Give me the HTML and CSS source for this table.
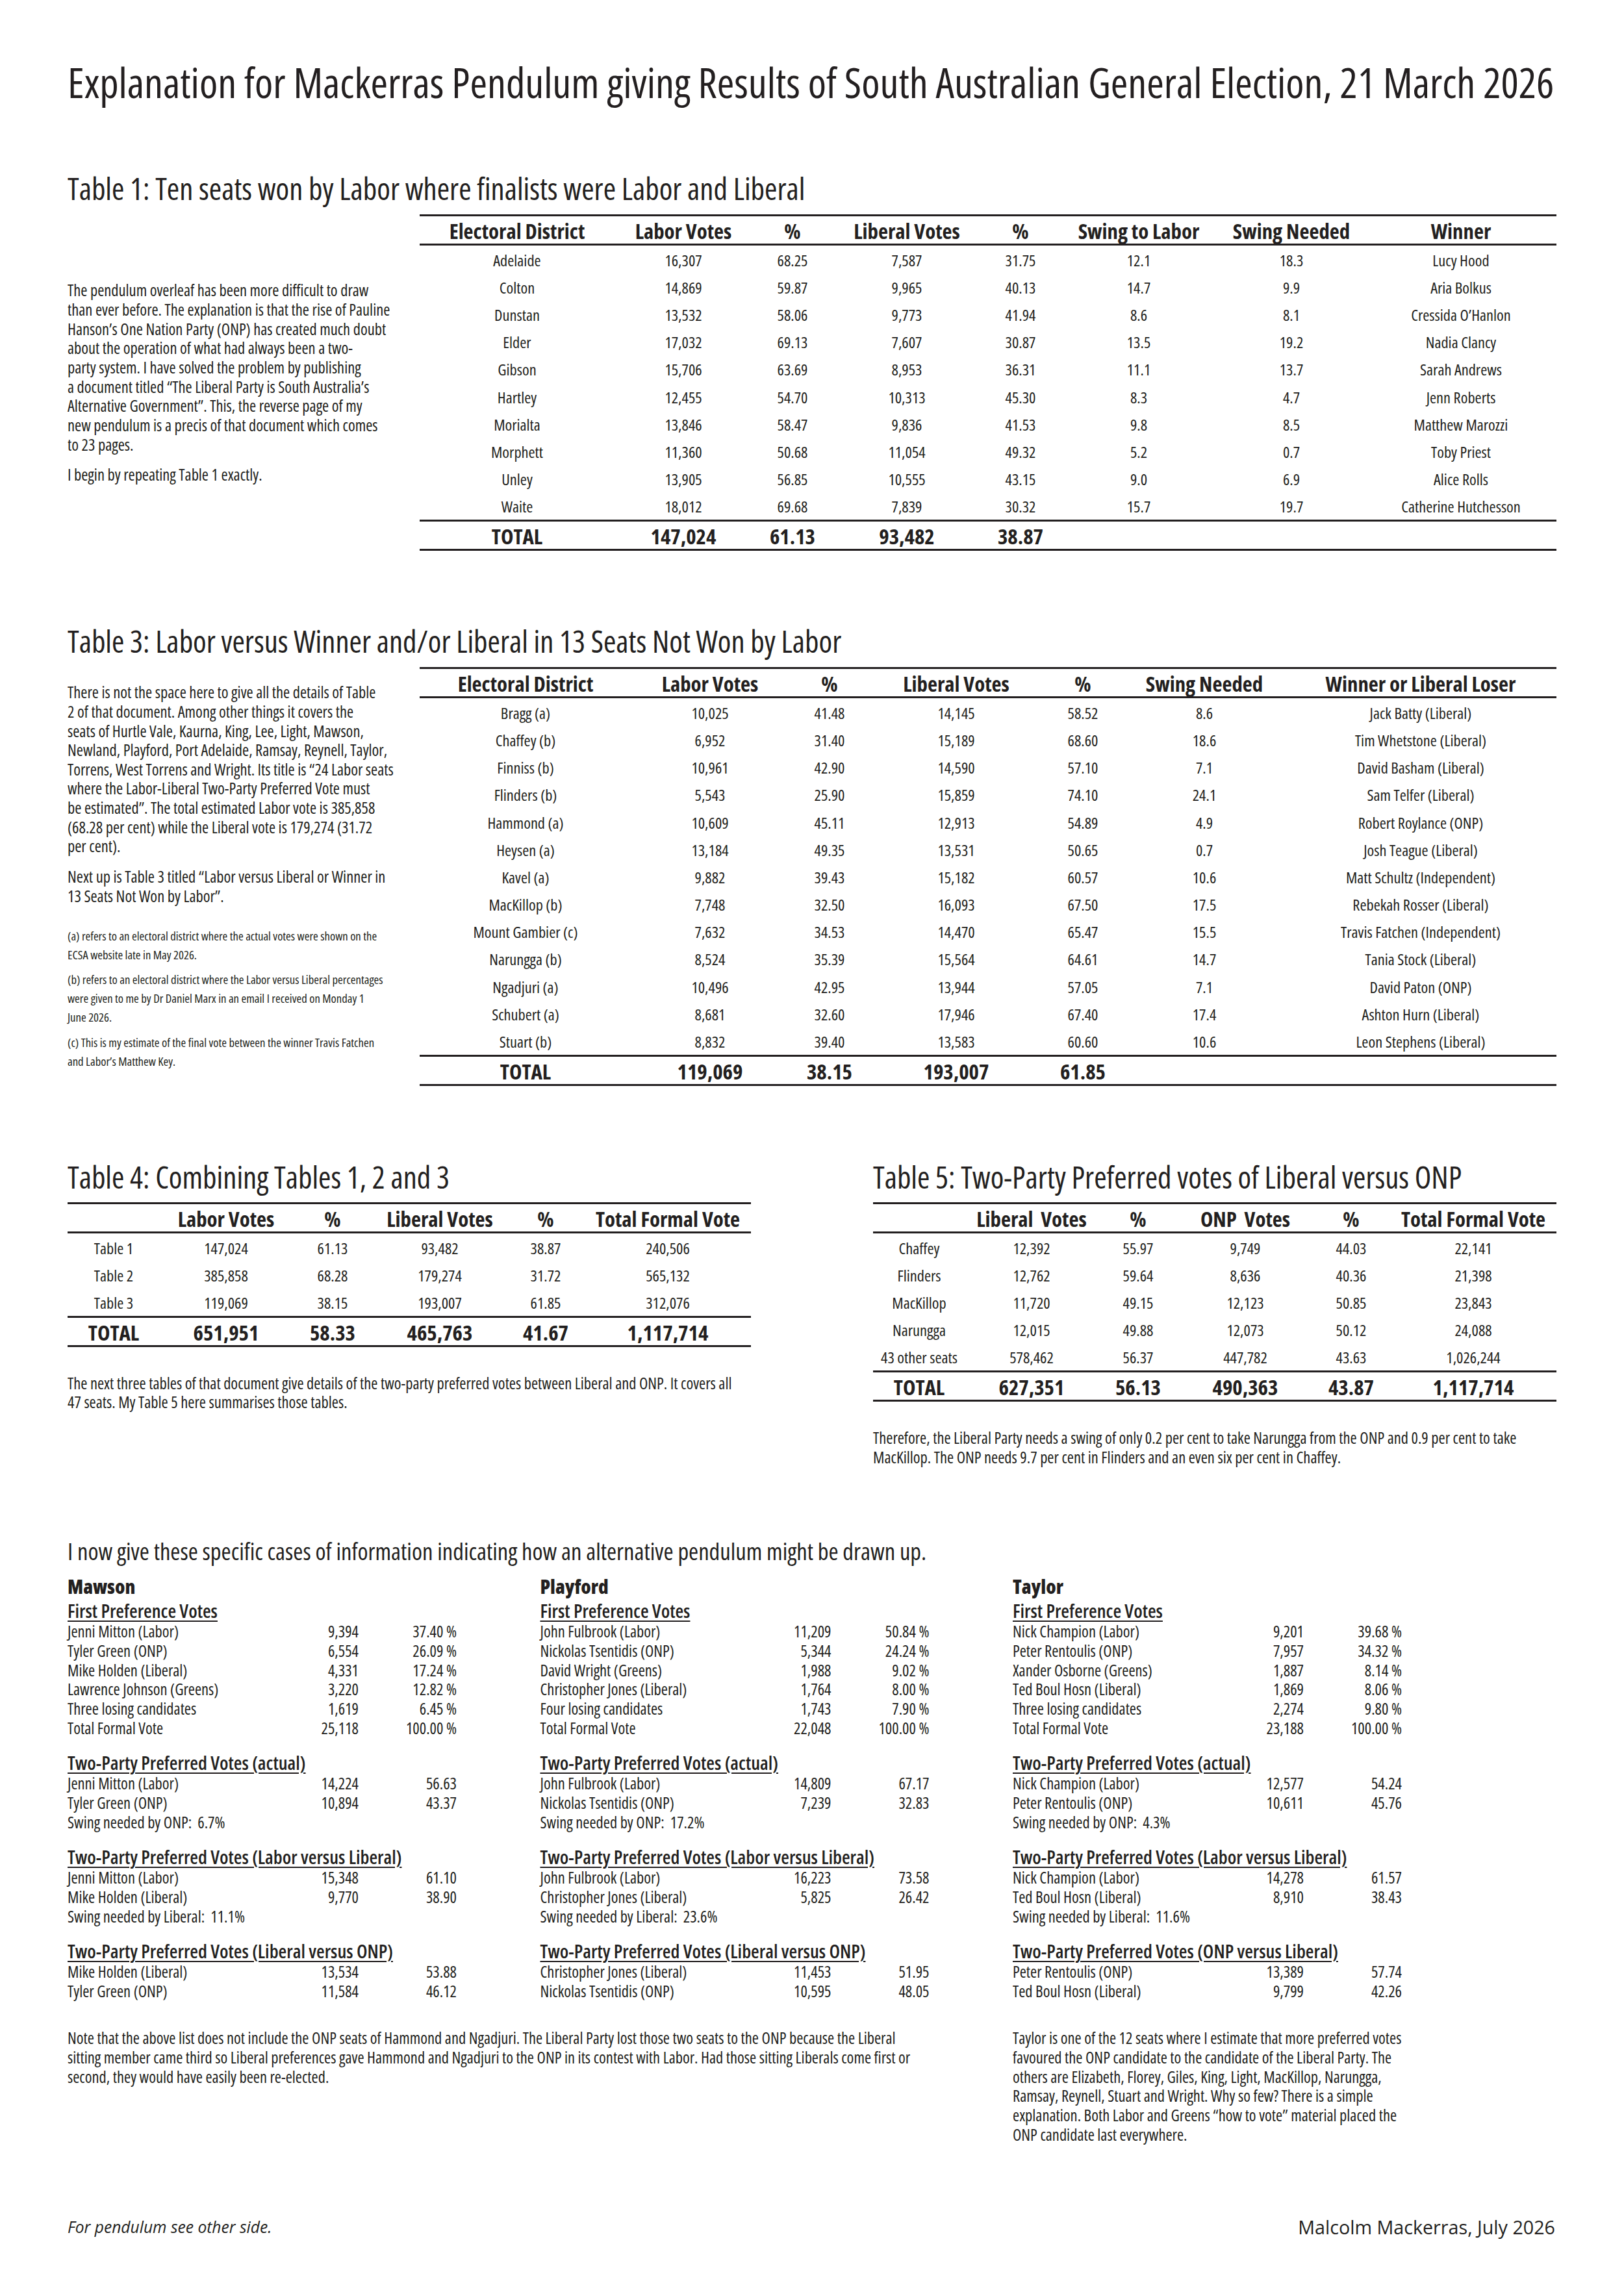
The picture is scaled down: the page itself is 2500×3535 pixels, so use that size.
FILE: index.html
```html
<!DOCTYPE html>
<html lang="en">
<head>
<meta charset="utf-8">
<title>Explanation for Mackerras Pendulum</title>
<link rel="stylesheet" href="styles.css">
</head>
<body>
<div class="page">
  <h1 class="title">Explanation for Mackerras Pendulum giving Results of South Australian General Election, 21 March 2026</h1>

  <section class="sec1">
    <h2 class="sec-title">Table 1: Ten seats won by Labor where finalists were Labor and Liberal</h2>
    <div class="split">
      <div class="side">
        <p>The pendulum overleaf has been more difficult to draw<br>than ever before. The explanation is that the rise of Pauline<br>Hanson’s One Nation Party (ONP) has created much doubt<br>about the operation of what had always been a two-<br>party system. I have solved the problem by publishing<br>a document titled “The Liberal Party is South Australia’s<br>Alternative Government”. This, the reverse page of my<br>new pendulum is a precis of that document which comes<br>to 23 pages.</p>
        <p>I begin by repeating Table 1 exactly.</p>
      </div>
      <table class="tbl t1">
        <colgroup><col><col><col><col><col><col><col><col></colgroup>
        <thead><tr><th>Electoral District</th><th>Labor Votes</th><th>%</th><th>Liberal Votes</th><th>%</th><th>Swing to Labor</th><th>Swing Needed</th><th>Winner</th></tr></thead>
        <tbody>
          <tr><td>Adelaide</td><td>16,307</td><td>68.25</td><td>7,587</td><td>31.75</td><td>12.1</td><td>18.3</td><td>Lucy Hood</td></tr>
          <tr><td>Colton</td><td>14,869</td><td>59.87</td><td>9,965</td><td>40.13</td><td>14.7</td><td>9.9</td><td>Aria Bolkus</td></tr>
          <tr><td>Dunstan</td><td>13,532</td><td>58.06</td><td>9,773</td><td>41.94</td><td>8.6</td><td>8.1</td><td>Cressida O’Hanlon</td></tr>
          <tr><td>Elder</td><td>17,032</td><td>69.13</td><td>7,607</td><td>30.87</td><td>13.5</td><td>19.2</td><td>Nadia Clancy</td></tr>
          <tr><td>Gibson</td><td>15,706</td><td>63.69</td><td>8,953</td><td>36.31</td><td>11.1</td><td>13.7</td><td>Sarah Andrews</td></tr>
          <tr><td>Hartley</td><td>12,455</td><td>54.70</td><td>10,313</td><td>45.30</td><td>8.3</td><td>4.7</td><td>Jenn Roberts</td></tr>
          <tr><td>Morialta</td><td>13,846</td><td>58.47</td><td>9,836</td><td>41.53</td><td>9.8</td><td>8.5</td><td>Matthew Marozzi</td></tr>
          <tr><td>Morphett</td><td>11,360</td><td>50.68</td><td>11,054</td><td>49.32</td><td>5.2</td><td>0.7</td><td>Toby Priest</td></tr>
          <tr><td>Unley</td><td>13,905</td><td>56.85</td><td>10,555</td><td>43.15</td><td>9.0</td><td>6.9</td><td>Alice Rolls</td></tr>
          <tr><td>Waite</td><td>18,012</td><td>69.68</td><td>7,839</td><td>30.32</td><td>15.7</td><td>19.7</td><td>Catherine Hutchesson</td></tr>
        </tbody>
        <tfoot><tr><td>TOTAL</td><td>147,024</td><td>61.13</td><td>93,482</td><td>38.87</td><td></td><td></td><td></td></tr></tfoot>
      </table>
    </div>
  </section>

  <section class="sec3">
    <h2 class="sec-title">Table 3: Labor versus Winner and/or Liberal in 13 Seats Not Won by Labor</h2>
    <div class="split">
      <div class="side">
        <p>There is not the space here to give all the details of Table<br>2 of that document. Among other things it covers the<br>seats of Hurtle Vale, Kaurna, King, Lee, Light, Mawson,<br>Newland, Playford, Port Adelaide, Ramsay, Reynell, Taylor,<br>Torrens, West Torrens and Wright. Its title is “24 Labor seats<br>where the Labor-Liberal Two-Party Preferred Vote must<br>be estimated”. The total estimated Labor vote is 385,858<br>(68.28 per cent) while the Liberal vote is 179,274 (31.72<br>per cent).</p>
        <p>Next up is Table 3 titled “Labor versus Liberal or Winner in<br>13 Seats Not Won by Labor”.</p>
        <div class="fn-list">
          <p class="fn">(a) refers to an electoral district where the actual votes were shown on the<br>ECSA website late in May 2026.</p>
          <p class="fn">(b) refers to an electoral district where the Labor versus Liberal percentages<br>were given to me by Dr Daniel Marx in an email I received on Monday 1<br>June 2026.</p>
          <p class="fn">(c) This is my estimate of the final vote between the winner Travis Fatchen<br>and Labor’s Matthew Key.</p>
        </div>
      </div>
      <table class="tbl t3">
        <colgroup><col><col><col><col><col><col><col></colgroup>
        <thead><tr><th>Electoral District</th><th>Labor Votes</th><th>%</th><th>Liberal Votes</th><th>%</th><th>Swing Needed</th><th>Winner or Liberal Loser</th></tr></thead>
        <tbody>
          <tr><td>Bragg (a)</td><td>10,025</td><td>41.48</td><td>14,145</td><td>58.52</td><td>8.6</td><td>Jack Batty (Liberal)</td></tr>
          <tr><td>Chaffey (b)</td><td>6,952</td><td>31.40</td><td>15,189</td><td>68.60</td><td>18.6</td><td>Tim Whetstone (Liberal)</td></tr>
          <tr><td>Finniss (b)</td><td>10,961</td><td>42.90</td><td>14,590</td><td>57.10</td><td>7.1</td><td>David Basham (Liberal)</td></tr>
          <tr><td>Flinders (b)</td><td>5,543</td><td>25.90</td><td>15,859</td><td>74.10</td><td>24.1</td><td>Sam Telfer (Liberal)</td></tr>
          <tr><td>Hammond (a)</td><td>10,609</td><td>45.11</td><td>12,913</td><td>54.89</td><td>4.9</td><td>Robert Roylance (ONP)</td></tr>
          <tr><td>Heysen (a)</td><td>13,184</td><td>49.35</td><td>13,531</td><td>50.65</td><td>0.7</td><td>Josh Teague (Liberal)</td></tr>
          <tr><td>Kavel (a)</td><td>9,882</td><td>39.43</td><td>15,182</td><td>60.57</td><td>10.6</td><td>Matt Schultz (Independent)</td></tr>
          <tr><td>MacKillop (b)</td><td>7,748</td><td>32.50</td><td>16,093</td><td>67.50</td><td>17.5</td><td>Rebekah Rosser (Liberal)</td></tr>
          <tr><td>Mount Gambier (c)</td><td>7,632</td><td>34.53</td><td>14,470</td><td>65.47</td><td>15.5</td><td>Travis Fatchen (Independent)</td></tr>
          <tr><td>Narungga (b)</td><td>8,524</td><td>35.39</td><td>15,564</td><td>64.61</td><td>14.7</td><td>Tania Stock (Liberal)</td></tr>
          <tr><td>Ngadjuri (a)</td><td>10,496</td><td>42.95</td><td>13,944</td><td>57.05</td><td>7.1</td><td>David Paton (ONP)</td></tr>
          <tr><td>Schubert (a)</td><td>8,681</td><td>32.60</td><td>17,946</td><td>67.40</td><td>17.4</td><td>Ashton Hurn (Liberal)</td></tr>
          <tr><td>Stuart (b)</td><td>8,832</td><td>39.40</td><td>13,583</td><td>60.60</td><td>10.6</td><td>Leon Stephens (Liberal)</td></tr>
        </tbody>
        <tfoot><tr><td>TOTAL</td><td>119,069</td><td>38.15</td><td>193,007</td><td>61.85</td><td></td><td></td></tr></tfoot>
      </table>
    </div>
  </section>

  <div class="pair">
    <section class="half">
      <h2 class="sec-title">Table 4: Combining Tables 1, 2 and 3</h2>
      <table class="tbl t45">
        <colgroup><col><col><col><col><col><col></colgroup>
        <thead><tr><th></th><th>Labor Votes</th><th>%</th><th>Liberal Votes</th><th>%</th><th>Total Formal Vote</th></tr></thead>
        <tbody>
          <tr><td>Table 1</td><td>147,024</td><td>61.13</td><td>93,482</td><td>38.87</td><td>240,506</td></tr>
          <tr><td>Table 2</td><td>385,858</td><td>68.28</td><td>179,274</td><td>31.72</td><td>565,132</td></tr>
          <tr><td>Table 3</td><td>119,069</td><td>38.15</td><td>193,007</td><td>61.85</td><td>312,076</td></tr>
        </tbody>
        <tfoot><tr><td>TOTAL</td><td>651,951</td><td>58.33</td><td>465,763</td><td>41.67</td><td>1,117,714</td></tr></tfoot>
      </table>
      <p class="after">The next three tables of that document give details of the two-party preferred votes between Liberal and ONP. It covers all<br>47 seats. My Table 5 here summarises those tables.</p>
    </section>
    <section class="half">
      <h2 class="sec-title">Table 5: Two-Party Preferred votes of Liberal versus ONP</h2>
      <table class="tbl t45">
        <colgroup><col><col><col><col><col><col></colgroup>
        <thead><tr><th></th><th>Liberal&nbsp; Votes</th><th>%</th><th>ONP&nbsp; Votes</th><th>%</th><th>Total Formal Vote</th></tr></thead>
        <tbody>
          <tr><td>Chaffey</td><td>12,392</td><td>55.97</td><td>9,749</td><td>44.03</td><td>22,141</td></tr>
          <tr><td>Flinders</td><td>12,762</td><td>59.64</td><td>8,636</td><td>40.36</td><td>21,398</td></tr>
          <tr><td>MacKillop</td><td>11,720</td><td>49.15</td><td>12,123</td><td>50.85</td><td>23,843</td></tr>
          <tr><td>Narungga</td><td>12,015</td><td>49.88</td><td>12,073</td><td>50.12</td><td>24,088</td></tr>
          <tr><td>43 other seats</td><td>578,462</td><td>56.37</td><td>447,782</td><td>43.63</td><td>1,026,244</td></tr>
        </tbody>
        <tfoot><tr><td>TOTAL</td><td>627,351</td><td>56.13</td><td>490,363</td><td>43.87</td><td>1,117,714</td></tr></tfoot>
      </table>
      <p class="after">Therefore, the Liberal Party needs a swing of only 0.2 per cent to take Narungga from the ONP and 0.9 per cent to take<br>MacKillop. The ONP needs 9.7 per cent in Flinders and an even six per cent in Chaffey.</p>
    </section>
  </div>

  <section class="cases">
    <h3 class="cases-title">I now give these specific cases of information indicating how an alternative pendulum might be drawn up.</h3>
    <div class="cols">
      <div class="seat-col">
        <div class="seat">Mawson</div>
        <div class="grp">
          <div class="sub">First Preference Votes</div>
          <div class="row"><span>Jenni Mitton (Labor)</span><span class="n">9,394</span><span class="p">37.40 %</span></div>
          <div class="row"><span>Tyler Green (ONP)</span><span class="n">6,554</span><span class="p">26.09 %</span></div>
          <div class="row"><span>Mike Holden (Liberal)</span><span class="n">4,331</span><span class="p">17.24 %</span></div>
          <div class="row"><span>Lawrence Johnson (Greens)</span><span class="n">3,220</span><span class="p">12.82 %</span></div>
          <div class="row"><span>Three losing candidates</span><span class="n">1,619</span><span class="p">6.45 %</span></div>
          <div class="row"><span>Total Formal Vote</span><span class="n">25,118</span><span class="p">100.00 %</span></div>
        </div>
        <div class="grp">
          <div class="sub">Two-Party Preferred Votes (actual)</div>
          <div class="row"><span>Jenni Mitton (Labor)</span><span class="n">14,224</span><span class="p">56.63</span></div>
          <div class="row"><span>Tyler Green (ONP)</span><span class="n">10,894</span><span class="p">43.37</span></div>
          <div class="swing">Swing needed by ONP:&nbsp; 6.7%</div>
        </div>
        <div class="grp">
          <div class="sub">Two-Party Preferred Votes (Labor versus Liberal)</div>
          <div class="row"><span>Jenni Mitton (Labor)</span><span class="n">15,348</span><span class="p">61.10</span></div>
          <div class="row"><span>Mike Holden (Liberal)</span><span class="n">9,770</span><span class="p">38.90</span></div>
          <div class="swing">Swing needed by Liberal:&nbsp; 11.1%</div>
        </div>
        <div class="grp">
          <div class="sub">Two-Party Preferred Votes (Liberal versus ONP)</div>
          <div class="row"><span>Mike Holden (Liberal)</span><span class="n">13,534</span><span class="p">53.88</span></div>
          <div class="row"><span>Tyler Green (ONP)</span><span class="n">11,584</span><span class="p">46.12</span></div>
        </div>
      </div>

      <div class="seat-col">
        <div class="seat">Playford</div>
        <div class="grp">
          <div class="sub">First Preference Votes</div>
          <div class="row"><span>John Fulbrook (Labor)</span><span class="n">11,209</span><span class="p">50.84 %</span></div>
          <div class="row"><span>Nickolas Tsentidis (ONP)</span><span class="n">5,344</span><span class="p">24.24 %</span></div>
          <div class="row"><span>David Wright (Greens)</span><span class="n">1,988</span><span class="p">9.02 %</span></div>
          <div class="row"><span>Christopher Jones (Liberal)</span><span class="n">1,764</span><span class="p">8.00 %</span></div>
          <div class="row"><span>Four losing candidates</span><span class="n">1,743</span><span class="p">7.90 %</span></div>
          <div class="row"><span>Total Formal Vote</span><span class="n">22,048</span><span class="p">100.00 %</span></div>
        </div>
        <div class="grp">
          <div class="sub">Two-Party Preferred Votes (actual)</div>
          <div class="row"><span>John Fulbrook (Labor)</span><span class="n">14,809</span><span class="p">67.17</span></div>
          <div class="row"><span>Nickolas Tsentidis (ONP)</span><span class="n">7,239</span><span class="p">32.83</span></div>
          <div class="swing">Swing needed by ONP:&nbsp; 17.2%</div>
        </div>
        <div class="grp">
          <div class="sub">Two-Party Preferred Votes (Labor versus Liberal)</div>
          <div class="row"><span>John Fulbrook (Labor)</span><span class="n">16,223</span><span class="p">73.58</span></div>
          <div class="row"><span>Christopher Jones (Liberal)</span><span class="n">5,825</span><span class="p">26.42</span></div>
          <div class="swing">Swing needed by Liberal:&nbsp; 23.6%</div>
        </div>
        <div class="grp">
          <div class="sub">Two-Party Preferred Votes (Liberal versus ONP)</div>
          <div class="row"><span>Christopher Jones (Liberal)</span><span class="n">11,453</span><span class="p">51.95</span></div>
          <div class="row"><span>Nickolas Tsentidis (ONP)</span><span class="n">10,595</span><span class="p">48.05</span></div>
        </div>
      </div>

      <div class="seat-col">
        <div class="seat">Taylor</div>
        <div class="grp">
          <div class="sub">First Preference Votes</div>
          <div class="row"><span>Nick Champion (Labor)</span><span class="n">9,201</span><span class="p">39.68 %</span></div>
          <div class="row"><span>Peter Rentoulis (ONP)</span><span class="n">7,957</span><span class="p">34.32 %</span></div>
          <div class="row"><span>Xander Osborne (Greens)</span><span class="n">1,887</span><span class="p">8.14 %</span></div>
          <div class="row"><span>Ted Boul Hosn (Liberal)</span><span class="n">1,869</span><span class="p">8.06 %</span></div>
          <div class="row"><span>Three losing candidates</span><span class="n">2,274</span><span class="p">9.80 %</span></div>
          <div class="row"><span>Total Formal Vote</span><span class="n">23,188</span><span class="p">100.00 %</span></div>
        </div>
        <div class="grp">
          <div class="sub">Two-Party Preferred Votes (actual)</div>
          <div class="row"><span>Nick Champion (Labor)</span><span class="n">12,577</span><span class="p">54.24</span></div>
          <div class="row"><span>Peter Rentoulis (ONP)</span><span class="n">10,611</span><span class="p">45.76</span></div>
          <div class="swing">Swing needed by ONP:&nbsp; 4.3%</div>
        </div>
        <div class="grp">
          <div class="sub">Two-Party Preferred Votes (Labor versus Liberal)</div>
          <div class="row"><span>Nick Champion (Labor)</span><span class="n">14,278</span><span class="p">61.57</span></div>
          <div class="row"><span>Ted Boul Hosn (Liberal)</span><span class="n">8,910</span><span class="p">38.43</span></div>
          <div class="swing">Swing needed by Liberal:&nbsp; 11.6%</div>
        </div>
        <div class="grp">
          <div class="sub">Two-Party Preferred Votes (ONP versus Liberal)</div>
          <div class="row"><span>Peter Rentoulis (ONP)</span><span class="n">13,389</span><span class="p">57.74</span></div>
          <div class="row"><span>Ted Boul Hosn (Liberal)</span><span class="n">9,799</span><span class="p">42.26</span></div>
        </div>
      </div>

      <p class="note">Note that the above list does not include the ONP seats of Hammond and Ngadjuri. The Liberal Party lost those two seats to the ONP because the Liberal<br>sitting member came third so Liberal preferences gave Hammond and Ngadjuri to the ONP in its contest with Labor. Had those sitting Liberals come first or<br>second, they would have easily been re-elected.</p>
      <p class="note-r">Taylor is one of the 12 seats where I estimate that more preferred votes<br>favoured the ONP candidate to the candidate of the Liberal Party. The<br>others are Elizabeth, Florey, Giles, King, Light, MacKillop, Narungga,<br>Ramsay, Reynell, Stuart and Wright. Why so few? There is a simple<br>explanation. Both Labor and Greens “how to vote” material placed the<br>ONP candidate last everywhere.</p>
    </div>
  </section>

  <footer class="footer">
    <span class="foot-left">For pendulum see other side.</span>
    <span class="foot-right">Malcolm Mackerras, July 2026</span>
  </footer>
</div>
</body>
</html>
```

FILE: styles.css
```css
:root {
  --ink: #231f20;
  --ff: "Open Sans", "DejaVu Sans Condensed", sans-serif;
  --ff2: "Open Sans", "Liberation Sans", sans-serif;
  --fs-title: 64.2px;
  --fs-h2: 46.9px;
  --fs-h3: 36.5px;
  --fs-body: 24.5px;
  --fs-cell: 24.4px;
  --fs-small: 18.7px;
  --fs-th: 32.8px;
  --fs-tot: 32.9px;
  --fs-sub: 29.1px;
  --fs-seat: 30px;
  --fs-foot: 28.7px;
  --fs-footi: 24.6px;
}

* { box-sizing: border-box; }

html, body { margin: 0; padding: 0; }

body {
  width: 2500px;
  min-height: 3535px;
  background: #ffffff;
  color: var(--ink);
  font-family: var(--ff);
  font-stretch: 75%;
}

.page { padding: 86px 104px 0; }

h1, h2, h3, p { margin: 0; font-weight: 400; }

.title {
  font-size: var(--fs-title);
  line-height: 80px;
  white-space: nowrap;
}

.sec-title {
  font-size: var(--fs-h2);
  line-height: 60px;
  white-space: nowrap;
  margin-bottom: 10px;
}

.sec1 { margin-top: 94px; }
.sec3 { margin-top: 108.7px; }

.split {
  display: flex;
  justify-content: space-between;
  align-items: center;
}

.side { width: 520px; }

.side p {
  font-size: var(--fs-body);
  line-height: 29.65px;
  white-space: nowrap;
}

.side p + p { margin-top: 17.3px; }

.side .fn-list { margin-top: 30.8px; }

.side .fn {
  font-size: var(--fs-small);
  line-height: 29.2px;
}

.side .fn + .fn { margin-top: 9px; }

/* tables */
.tbl {
  border-collapse: separate;
  border-spacing: 0;
  table-layout: fixed;
}

.t1, .t3 { width: 1750px; }
.t45 { width: 1052px; }

.tbl th, .tbl td {
  padding: 0;
  line-height: 30px;
  text-align: center;
  vertical-align: middle;
  white-space: nowrap;
}

.tbl thead tr { height: 48.2px; }

.tbl thead th {
  font-size: var(--fs-th);
  font-weight: 700;
  padding-top: 3.6px;
  border-top: 3px solid var(--ink);
  border-bottom: 3px solid var(--ink);
}

.tbl tbody tr { height: 42.18px; }

.tbl tbody td {
  font-size: var(--fs-cell);
  padding-top: 3px;
}

.tbl tfoot tr { height: 48.5px; }

.tbl tfoot td {
  font-size: var(--fs-tot);
  font-weight: 700;
  padding-top: 3.5px;
  border-top: 3px solid var(--ink);
  border-bottom: 3px solid var(--ink);
}

.t1 col:nth-child(1) { width: 300px; }
.t1 col:nth-child(2) { width: 212px; }
.t1 col:nth-child(3) { width: 124px; }
.t1 col:nth-child(4) { width: 228px; }
.t1 col:nth-child(5) { width: 122px; }
.t1 col:nth-child(6) { width: 242px; }
.t1 col:nth-child(7) { width: 228px; }
.t1 col:nth-child(8) { width: 294px; }

.t3 col:nth-child(1) { width: 326px; }
.t3 col:nth-child(2) { width: 242px; }
.t3 col:nth-child(3) { width: 126px; }
.t3 col:nth-child(4) { width: 264px; }
.t3 col:nth-child(5) { width: 126px; }
.t3 col:nth-child(6) { width: 248px; }
.t3 col:nth-child(7) { width: 418px; }

.t45 col:nth-child(1) { width: 142px; }
.t45 col:nth-child(2) { width: 204px; }
.t45 col:nth-child(3) { width: 124px; }
.t45 col:nth-child(4) { width: 206px; }
.t45 col:nth-child(5) { width: 120px; }
.t45 col:nth-child(6) { width: 256px; }

/* tables 4 and 5 */
.pair {
  display: flex;
  justify-content: space-between;
  align-items: flex-start;
  margin-top: 109.9px;
}

.half { width: 1052px; }
.half .sec-title { margin-bottom: 9px; }

.after {
  margin-top: 40.5px;
  font-size: var(--fs-body);
  line-height: 29.65px;
  white-space: nowrap;
}

/* cases */
.cases { margin-top: 102.4px; }

.cases-title {
  font-size: var(--fs-h3);
  line-height: 54px;
  white-space: nowrap;
}

.cols {
  display: grid;
  grid-template-columns: 727.5px 727.5px 600px;
  row-gap: 42.5px;
  margin-top: 8px;
}

.seat {
  font-size: var(--fs-seat);
  font-weight: 800;
  line-height: 40px;
}

.sub {
  font-size: var(--fs-sub);
  font-weight: 600;
  line-height: 34.6px;
  white-space: nowrap;
  text-decoration: underline;
  text-decoration-thickness: 2px;
  text-underline-offset: 4px;
}

.grp + .grp { margin-top: 21.5px; }

.row {
  display: grid;
  grid-template-columns: 340px 108px 151px;
  font-size: var(--fs-body);
  line-height: 29.65px;
  white-space: nowrap;
}

.row .n, .row .p { text-align: right; }

.swing {
  font-size: var(--fs-body);
  line-height: 29.65px;
  white-space: nowrap;
}

.note, .note-r {
  font-size: var(--fs-body);
  line-height: 29.65px;
  white-space: nowrap;
}

.note { grid-column: 1 / 3; }
.note-r { grid-column: 3; }

.footer {
  display: flex;
  justify-content: space-between;
  align-items: center;
  margin-top: 107.6px;
  padding-right: 2px;
  font-family: var(--ff2);
  font-stretch: 100%;
  line-height: 40px;
}

.foot-left { font-style: italic; font-size: var(--fs-footi); }
.foot-right { font-size: var(--fs-foot); }
```
